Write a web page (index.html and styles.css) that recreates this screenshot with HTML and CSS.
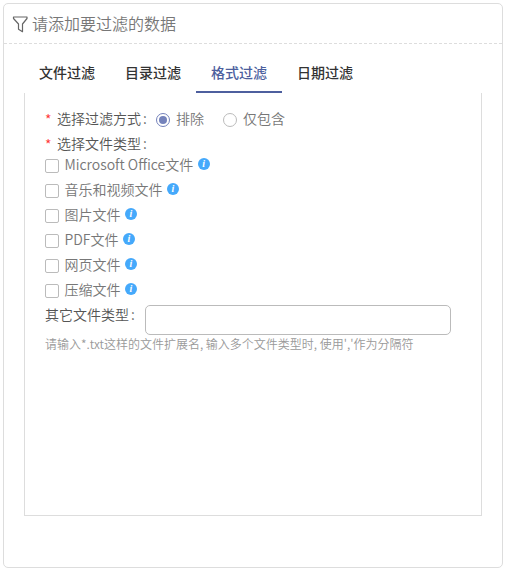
FILE: index.html
```html
<!DOCTYPE html>
<html lang="zh-CN">
<head>
    <meta charset="UTF-8">
    <meta name="viewport" content="width=device-width, initial-scale=1.0">
    <title>过滤设置</title>
    <link rel="stylesheet" href="styles.css">
</head>
<body>
    <div class="panel">
        <div class="panel-header">
            <svg class="filter-icon" width="16" height="17" viewBox="0 0 16 17">
                <path d="M1.500 1h13.500v1.500L10.500 8v7.700L6.500 13.200V8L1.500 2.500z" fill="none" stroke="#666" stroke-width="1.2" stroke-linejoin="round"/>
            </svg>
            <span>请添加要过滤的数据</span>
        </div>
        <div class="tabs">
            <div class="tab first">文件过滤</div>
            <div class="tab">目录过滤</div>
            <div class="tab active">格式过滤</div>
            <div class="tab">日期过滤</div>
        </div>
        <div class="tab-content">
            <div class="form-row">
                <span class="required">*</span>
                <span class="form-label">选择过滤方式<span class="colon">:</span></span>
                <span class="radio checked"></span>
                <span class="radio-label">排除</span>
                <span class="radio"></span>
                <span class="radio-label">仅包含</span>
            </div>
            <div class="form-row type-row">
                <span class="required">*</span>
                <span class="form-label">选择文件类型<span class="colon">:</span></span>
            </div>
            <div class="check-row">
                <span class="checkbox"></span>
                <span class="check-label">Microsoft Office文件</span>
                <span class="info">i</span>
            </div>
            <div class="check-row">
                <span class="checkbox"></span>
                <span class="check-label">音乐和视频文件</span>
                <span class="info">i</span>
            </div>
            <div class="check-row">
                <span class="checkbox"></span>
                <span class="check-label">图片文件</span>
                <span class="info">i</span>
            </div>
            <div class="check-row">
                <span class="checkbox"></span>
                <span class="check-label">PDF文件</span>
                <span class="info">i</span>
            </div>
            <div class="check-row">
                <span class="checkbox"></span>
                <span class="check-label">网页文件</span>
                <span class="info">i</span>
            </div>
            <div class="check-row">
                <span class="checkbox"></span>
                <span class="check-label">压缩文件</span>
                <span class="info">i</span>
            </div>
            <div class="other-row">
                <label class="form-label" for="other-type">其它文件类型<span class="colon">:</span></label>
                <input id="other-type" type="text">
            </div>
            <div class="hint">请输入*.txt这样的文件扩展名, 输入多个文件类型时, 使用','作为分隔符</div>
        </div>
    </div>
</body>
</html>
```
FILE: styles.css
```css
* {
    box-sizing: border-box;
}
body {
    margin: 0;
    padding: 3px;
    background-color: #fff;
    font-family: "Noto Sans CJK SC", sans-serif;
    font-size: 14px;
    font-weight: 350;
    color: #777;
    white-space: nowrap;
}
.panel {
    width: 500px;
    height: 565px;
    border: 1px solid #ddd;
    border-radius: 5px;
}
.panel-header {
    display: flex;
    align-items: center;
    height: 40px;
    padding: 0 0 2px 8px;
    border-bottom: 1px dashed #ddd;
    font-size: 16px;
}
.filter-icon {
    margin: 3px 4px 0 0;
}
.tabs {
    display: flex;
    height: 49px;
    margin-left: 20px;
    padding-top: 10px;
}
.tab {
    width: 86px;
    height: 39px;
    line-height: 37px;
    text-align: center;
    font-weight: 500;
    color: #333;
}
.tab.first {
    line-height: 36px;
}
.tab.active {
    color: #4d5f9e;
    border-bottom: 2px solid #4d5f9e;
}
.tab-content {
    width: 458px;
    height: 423px;
    margin-left: 20px;
    padding: 13px 0 0 20px;
    border: 1px solid #ddd;
    border-top: none;
}
.form-row {
    display: flex;
    align-items: center;
    height: 25px;
    line-height: 25px;
}
.type-row {
    height: 21px;
    padding-top: 3px;
}
.required {
    width: 12px;
    padding-top: 2px;
    color: #f33;
}
.form-label {
    width: 99px;
    color: #555;
}
.colon {
    margin-left: 2px;
}
.radio {
    display: flex;
    align-items: center;
    justify-content: center;
    width: 14px;
    height: 14px;
    margin: 2px 6px 0 0;
    border: 1px solid #bbb;
    border-radius: 50%;
}
.radio.checked {
    border-color: #7482bb;
}
.radio.checked::after {
    content: "";
    width: 8px;
    height: 8px;
    border-radius: 50%;
    background-color: #7482bb;
}
.radio-label {
    margin-right: 19px;
}
.check-row {
    display: flex;
    align-items: center;
    height: 25px;
    line-height: 25px;
}
.checkbox {
    width: 14px;
    height: 14px;
    margin: 2px 5.5px 0 0;
    border: 1px solid #bbb;
    border-radius: 2px;
}
.info {
    width: 12px;
    height: 12px;
    margin: 0 0 2px 4.5px;
    border-radius: 50%;
    background-color: #45a9fb;
    color: #fff;
    font: italic bold 10px/12px "Liberation Serif", serif;
    text-align: center;
}
.other-row {
    display: flex;
    height: 30px;
    margin-top: 3px;
    line-height: 18px;
}
.other-row .form-label {
    width: 100px;
}
.other-row input {
    width: 306px;
    height: 30px;
    border: 1px solid #bbb;
    border-radius: 5px;
    outline: none;
}
.hint {
    line-height: 18px;
    font-size: 12px;
    color: #999;
}
```
